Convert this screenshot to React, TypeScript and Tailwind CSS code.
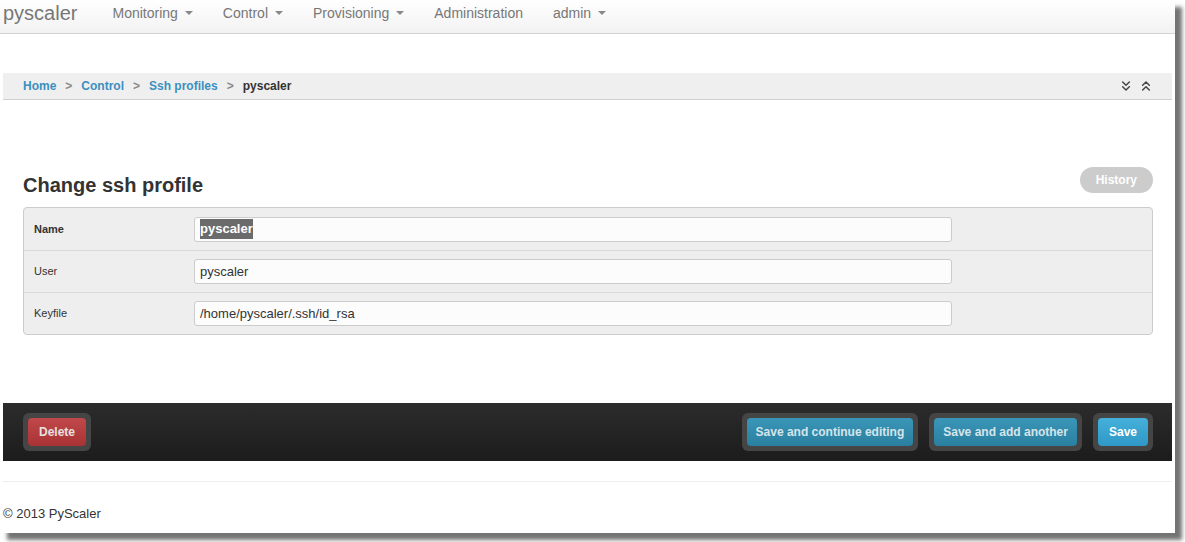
import { ChevronsDown, ChevronsUp } from 'lucide-react';

const font = { fontFamily: '"Liberation Sans", Arial, sans-serif' };

const Caret = () => (
  <span className="ml-[7px] inline-block h-0 w-0 border-x-[4px] border-t-[4px] border-x-transparent border-t-[#888] align-middle" />
);

const navItems = [
  { label: 'Monitoring', caret: true },
  { label: 'Control', caret: true },
  { label: 'Provisioning', caret: true },
  { label: 'Administration', caret: false },
  { label: 'admin', caret: true },
];

const crumbs = ['Home', 'Control', 'Ssh profiles'];

const fields = [
  { label: 'Name', value: 'pyscaler', required: true },
  { label: 'User', value: 'pyscaler', required: false },
  { label: 'Keyfile', value: '/home/pyscaler/.ssh/id_rsa', required: false },
];

const ActionButton = ({ label, tone }: { label: string; tone: 'red' | 'blue' | 'bright' }) => {
  const inner =
    tone === 'red'
      ? 'bg-gradient-to-b from-[#c0484a] to-[#a83234] text-[#e8e0e0] px-[11px]'
      : tone === 'blue'
        ? 'bg-gradient-to-b from-[#3a96b8] to-[#2a7f9f] text-[#d6e4ea] px-[9px]'
        : 'bg-gradient-to-b from-[#44b0db] to-[#2f98c6] text-white px-[11px]';
  return (
    <div className="rounded-[6px] bg-[#454545] p-[5px]">
      <div className={`flex h-[28px] items-center rounded-[4px] text-[12px] font-bold ${inner}`}>
        {label}
      </div>
    </div>
  );
};

export default function App() {
  return (
    <div className="h-[542px] w-[1185px] overflow-hidden bg-white" style={font}>
      <div className="flex h-[533px] w-[1175px] flex-col bg-white shadow-[7px_7px_4px_rgba(0,0,0,0.55)]">
        {/* navbar */}
        <div className="flex h-[34px] shrink-0 items-start border-b border-[#d4d4d4] bg-gradient-to-b from-white to-[#f2f2f2] pt-[2px]">
          <span className="pl-[3px] pr-[20px] text-[20px] leading-[22px] text-[#777]">pyscaler</span>
          {navItems.map((item) => (
            <span key={item.label} className="flex items-center px-[15px] text-[14px] leading-[22px] text-[#777]">
              {item.label}
              {item.caret && <Caret />}
            </span>
          ))}
        </div>

        {/* breadcrumbs */}
        <div className="mx-[3px] mt-[39px] flex h-[27px] shrink-0 items-center justify-between border-b border-[#d0d0d0] bg-[#efefef] pl-[20px] pr-[18px]">
          <div className="flex items-center text-[12px] font-bold">
            {crumbs.map((c) => (
              <span key={c} className="flex items-center">
                <span className="text-[#3b8fc0]">{c}</span>
                <span className="px-[9px] text-[#888]">&gt;</span>
              </span>
            ))}
            <span className="text-[#333]">pyscaler</span>
          </div>
          <div className="flex items-center gap-[4px] text-[#444]">
            <ChevronsDown size={16} strokeWidth={2.2} />
            <ChevronsUp size={16} strokeWidth={2.2} />
          </div>
        </div>

        {/* content */}
        <div className="pl-[23px] pr-[22px] pt-[67px]">
          <div className="flex items-start justify-between">
            <h1 className="mt-[8px] text-[20px] font-bold leading-[20px] text-[#333]">Change ssh profile</h1>
            <span className="flex h-[26px] items-center rounded-full bg-[#cccccc] px-[16px] text-[12px] font-bold text-white">
              History
            </span>
          </div>

          <div className="mt-[12px] rounded-[4px] border border-[#cccccc] bg-[#eeeeee]">
            {fields.map((f, i) => (
              <div
                key={f.label}
                className={`flex h-[42px] items-center ${i > 0 ? 'border-t border-[#d9d9d9]' : ''}`}
              >
                <span className={`w-[170px] pl-[10px] text-[11px] text-[#333] ${f.required ? 'font-bold' : ''}`}>
                  {f.label}
                </span>
                <div className="flex h-[25px] w-[758px] items-center rounded-[3px] border border-[#cccccc] bg-[#fcfcfc] px-[5px] text-[13px] text-[#333]">
                  {i === 0 ? <span className="bg-[#6b6b6b] font-bold text-white">{f.value}</span> : f.value}
                </div>
              </div>
            ))}
          </div>
        </div>

        {/* submit row */}
        <div className="mx-[3px] mt-[68px] flex h-[58px] shrink-0 items-center justify-between bg-gradient-to-b from-[#2c2c2c] to-[#1c1c1c] pl-[20px] pr-[19px]">
          <ActionButton label="Delete" tone="red" />
          <div className="flex items-center gap-[11px]">
            <ActionButton label="Save and continue editing" tone="blue" />
            <ActionButton label="Save and add another" tone="blue" />
            <ActionButton label="Save" tone="bright" />
          </div>
        </div>

        {/* footer */}
        <div className="mx-[3px] mt-[20px] border-t border-[#eeeeee]" />
        <div className="pl-[3px] pt-[23px] text-[13px] leading-[18px] text-[#333]">© 2013 PyScaler</div>
      </div>
    </div>
  );
}
